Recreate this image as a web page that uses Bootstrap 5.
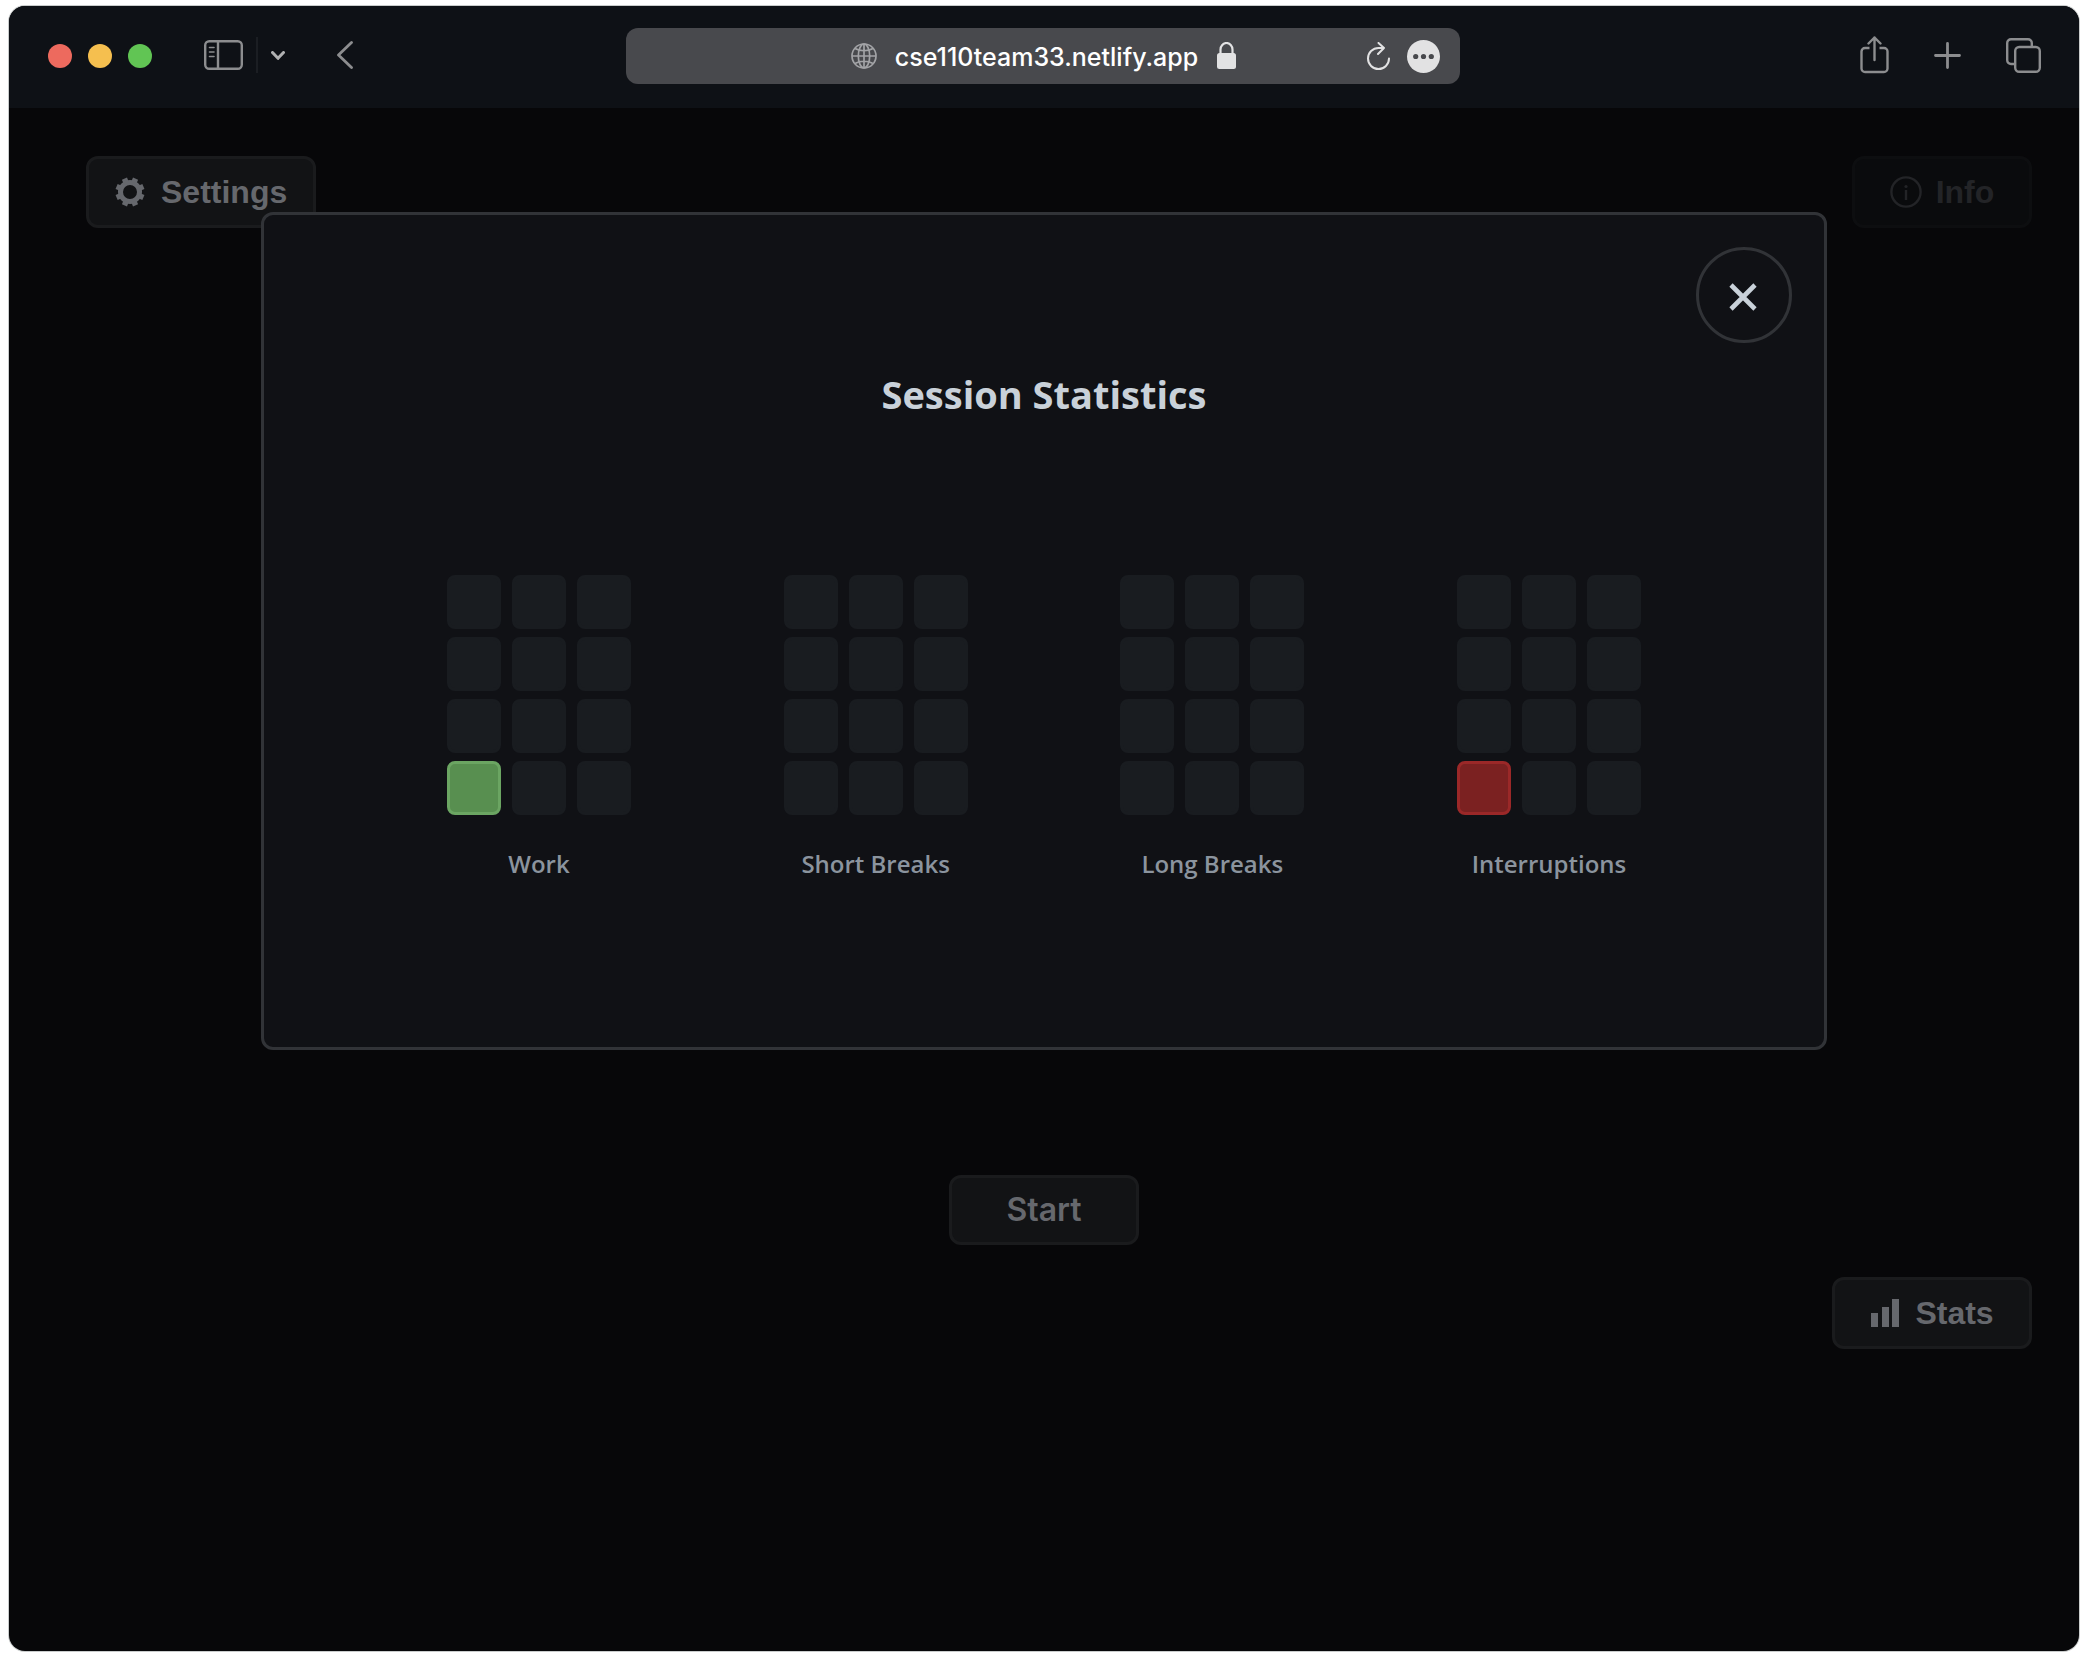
<!DOCTYPE html>
<html lang="en">
<head>
<meta charset="utf-8">
<meta name="viewport" content="width=device-width, initial-scale=1">
<title>Session Statistics</title>
<link href="https://cdn.jsdelivr.net/npm/bootstrap@5.3.0/dist/css/bootstrap.min.css" rel="stylesheet">
<style>
  body { background: #fff; padding: 6px 8px 6px 9px; font-family: "Liberation Sans", sans-serif; }
  svg { display: block; flex: none; }
  .browser { min-height: calc(100vh - 12px); border-radius: 16px; overflow: hidden; background: #070709; box-shadow: 0 0 0 1px #c9cccc; }
  /* browser toolbar */
  .toolbar { display: grid; grid-template-columns: 1fr minmax(0, 834px) 1fr; align-items: center; height: 102px; padding: 0 38px 4px 36px; background: #0e1116; color: #8c8d8f; }
  .toolbar button { padding: 0; border: 0; background: none; color: inherit; }
  .toolbar .light { width: 24px; height: 24px; border-radius: 50%; }
  .toolbar .light-close { background: #ed6a5e; }
  .toolbar .light-min { background: #f5bf4f; }
  .toolbar .light-max { background: #61c554; }
  .lights { gap: 16px; margin: 2px 0 0 3px; }
  .side-toggle { margin-left: 52px; }
  .split { width: 2px; height: 36px; margin: 0 13px; background: #1b1e23; }
  .back { margin-left: 52px; }
  .address { display: grid; grid-template-columns: 1fr auto 1fr; align-items: center; height: 56px; padding: 0 20px; border-radius: 12px; background: #48494d; margin-top: 2px; }
  .url { width: 308px; height: 42px; padding: 2px 0 0; border: 0; background: none; color: #fff; font: 500 25px/40px Inter, sans-serif; text-align: center; }
  .tools { gap: 45px; }
  /* page */
  .page-top { padding: 48px 47px 0 77px; }
  .timer-area { height: 947px; }
  .page-bottom { padding: 32px 47px 48px; }
  .pomo-btn { display: inline-flex; align-items: center; justify-content: center; gap: 16px; height: 72px; padding: 0 26px; border: 3px solid #1a1b1d; border-radius: 12px; background: #121315; color: #66686d; font: 700 32px/38px "Liberation Sans", sans-serif; }
  .btn-start { width: 190px; height: 70px; font: 600 32px/38px Inter, sans-serif; }
  .btn-info2 { width: 180px; gap: 14px; background: #0a0b0d; border-color: #0d0e10; color: #232427; }
  .btn-stats { width: 200px; }
  /* statistics dialog */
  .overlay { position: absolute; inset: 0; padding: 104px 252px 0; pointer-events: none; }
  .stats-dialog { position: relative; padding: 153px 183px 166px; border: 3px solid #313337; border-radius: 12px; background: #101115; font-family: "Open Sans", "Noto Sans", sans-serif; pointer-events: auto; }
  .close-btn { position: absolute; top: 32px; right: 32px; width: 96px; height: 96px; border: 3px solid #313337; border-radius: 50%; background: none; color: #c9d1d9; display: flex; align-items: center; justify-content: center; padding: 3px 3px 0 0; }
  .stats-title { margin: 0 0 155px; color: #c9d1d9; font-size: 38px; line-height: 52px; font-weight: 700; }
  .cells { display: grid; grid-template-columns: repeat(3, 54px); gap: 8px 11px; }
  .cell { height: 54px; border: 3px solid #191c20; border-radius: 8px; background: #191c20; }
  .cell-work { background: #588f50; border-color: #6ba562; }
  .cell-stop { background: #7b2121; border-color: #9b2828; }
  .stat-name { margin-top: 32px; color: #8b949e; font-size: 24px; line-height: 34px; font-weight: 600; text-align: center; }
</style>
</head>
<body>
<div class="browser">
  <header class="toolbar">
    <div class="d-flex align-items-center">
      <div class="lights d-flex">
        <button class="light light-close" aria-label="Close window"></button>
        <button class="light light-min" aria-label="Minimise"></button>
        <button class="light light-max" aria-label="Full screen"></button>
      </div>
      <button class="side-toggle" aria-label="Sidebar"><svg width="39" height="30" viewBox="0 0 39 30" fill="none" stroke="currentColor" stroke-width="2.400"><rect x="1.200" y="1.200" width="36.600" height="27.600" rx="4"/><path d="M14 1v28"/><path d="M5.500 7.500h4.500M5.500 12h4.500M5.500 16.500h4.500" stroke-width="1.600" stroke-linecap="round"/></svg></button>
      <div class="split"></div>
      <button aria-label="Tab groups"><svg width="14" height="9" viewBox="0 0 14 9" fill="none" stroke="#b0b1b2" stroke-width="3" stroke-linecap="round" stroke-linejoin="round"><path d="M1.500 1.500 7 7.300l5.500-5.800"/></svg></button>
      <button class="back" aria-label="Back"><svg width="16" height="28" viewBox="0 0 16 28" fill="none" stroke="currentColor" stroke-width="2.800" stroke-linecap="round" stroke-linejoin="round"><path d="M14.500 1.500 1.500 14l13 12.500"/></svg></button>
    </div>
    <div class="address">
      <span></span>
      <div class="d-flex align-items-center">
        <svg class="me-3" width="26" height="26" viewBox="0 0 26 26" fill="none" stroke="#a2a3a6" stroke-width="1.700"><circle cx="13" cy="13" r="12"/><ellipse cx="13" cy="13" rx="5.700" ry="12"/><path d="M13 1v24M1 13h24M4 5.500c5 3 13 3 18 0M4 20.500c5-3 13-3 18 0"/></svg>
        <input class="url" type="text" value="cse110team33.netlify.app" aria-label="Address">
        <svg class="ms-3" width="19" height="28" viewBox="0 0 19 28"><rect y="11" width="19" height="16" rx="2.500" fill="#e2e2e3"/><path d="M3.500 12V7.500a6 6.500 0 0 1 12 0V12" fill="none" stroke="#e2e2e3" stroke-width="2.200"/></svg>
      </div>
      <div class="d-flex align-items-center justify-content-end gap-3">
        <button aria-label="Reload"><svg width="24" height="28" viewBox="0 0 24 28" fill="none" stroke="#e2e2e3" stroke-width="2" stroke-linecap="round" stroke-linejoin="round"><path d="M22 16.500A10.500 10.500 0 1 1 11.500 6H17M11.500 1l5.500 5-6 6"/></svg></button>
        <button aria-label="Page menu"><svg width="33" height="33" viewBox="0 0 33 33"><circle cx="16.500" cy="16.500" r="16.500" fill="#e2e2e3"/><g fill="#48494d"><circle cx="8.700" cy="16.500" r="2.600"/><circle cx="16.500" cy="16.500" r="2.600"/><circle cx="24.300" cy="16.500" r="2.600"/></g></svg></button>
      </div>
    </div>
    <div class="tools d-flex align-items-center justify-content-end">
      <button aria-label="Share"><svg width="29" height="38" viewBox="0 0 29 38" fill="none" stroke="currentColor" stroke-width="2.400" stroke-linecap="round" stroke-linejoin="round"><path d="M9.500 12H5a3.500 3.500 0 0 0-3.500 3.500v17A3.500 3.500 0 0 0 5 36h19a3.500 3.500 0 0 0 3.500-3.500v-17A3.500 3.500 0 0 0 24 12h-4.500" stroke-linecap="butt"/><path d="M14.500 24V1.500M8.500 7.500l6-6 6 6"/></svg></button>
      <button aria-label="New tab"><svg width="27" height="27" viewBox="0 0 27 27" fill="none" stroke="currentColor" stroke-width="2.800" stroke-linecap="round"><path d="M13.500 1.500v24M1.500 13.500h24"/></svg></button>
      <button aria-label="Tab overview"><svg width="35" height="35" viewBox="0 0 35 35" fill="none" stroke="currentColor" stroke-width="2.400"><rect x="9.200" y="9" width="24.600" height="24.800" rx="4"/><path d="M9 26H5a3.800 3.800 0 0 1-3.800-3.800V5A3.800 3.800 0 0 1 5 1.200h17A3.800 3.800 0 0 1 25.800 5v4"/></svg></button>
    </div>
  </header>

  <main class="position-relative">
    <div class="page-top d-flex justify-content-between">
      <button class="pomo-btn"><svg width="30" height="30" viewBox="-15 -15 30 30" fill="none" stroke="currentColor"><circle r="9.500" stroke-width="5"/><g stroke-width="5.500"><path d="M0-14.500V-10" transform="rotate(22.500)"/><path d="M0-14.500V-10" transform="rotate(67.500)"/><path d="M0-14.500V-10" transform="rotate(112.500)"/><path d="M0-14.500V-10" transform="rotate(157.500)"/><path d="M0-14.500V-10" transform="rotate(202.500)"/><path d="M0-14.500V-10" transform="rotate(247.500)"/><path d="M0-14.500V-10" transform="rotate(292.500)"/><path d="M0-14.500V-10" transform="rotate(337.500)"/></g></svg>Settings</button>
      <button class="pomo-btn btn-info2"><svg width="32" height="32" viewBox="0 0 32 32" fill="none" stroke="currentColor" stroke-width="2.400"><circle cx="16" cy="16" r="14.600"/><path d="M16 14v10"/><circle cx="16" cy="10.500" r="1.600" fill="currentColor" stroke="none"/></svg>Info</button>
    </div>
    <div class="timer-area"></div>
    <div class="d-flex justify-content-center"><button class="pomo-btn btn-start">Start</button></div>
    <div class="page-bottom d-flex justify-content-end">
      <button class="pomo-btn btn-stats"><svg width="29" height="28" viewBox="0 0 29 28" fill="currentColor"><path d="M1 14h7v14H1zM12 8h7v20h-7zM22 0h7v28h-7z"/></svg>Stats</button>
    </div>

    <div class="overlay">
      <section class="stats-dialog" role="dialog" aria-labelledby="stats-title">
        <button class="close-btn" aria-label="Close"><svg width="28" height="28" viewBox="0 0 28 28" fill="none" stroke="currentColor" stroke-width="4.600"><path d="M2 2l24 24M26 2 2 26"/></svg></button>
        <h1 class="stats-title text-center" id="stats-title">Session Statistics</h1>
        <div class="d-flex justify-content-between">
          <div>
            <div class="cells"><i class="cell"></i><i class="cell"></i><i class="cell"></i><i class="cell"></i><i class="cell"></i><i class="cell"></i><i class="cell"></i><i class="cell"></i><i class="cell"></i><i class="cell cell-work"></i><i class="cell"></i><i class="cell"></i></div>
            <div class="stat-name">Work</div>
          </div>
          <div>
            <div class="cells"><i class="cell"></i><i class="cell"></i><i class="cell"></i><i class="cell"></i><i class="cell"></i><i class="cell"></i><i class="cell"></i><i class="cell"></i><i class="cell"></i><i class="cell"></i><i class="cell"></i><i class="cell"></i></div>
            <div class="stat-name">Short Breaks</div>
          </div>
          <div>
            <div class="cells"><i class="cell"></i><i class="cell"></i><i class="cell"></i><i class="cell"></i><i class="cell"></i><i class="cell"></i><i class="cell"></i><i class="cell"></i><i class="cell"></i><i class="cell"></i><i class="cell"></i><i class="cell"></i></div>
            <div class="stat-name">Long Breaks</div>
          </div>
          <div>
            <div class="cells"><i class="cell"></i><i class="cell"></i><i class="cell"></i><i class="cell"></i><i class="cell"></i><i class="cell"></i><i class="cell"></i><i class="cell"></i><i class="cell"></i><i class="cell cell-stop"></i><i class="cell"></i><i class="cell"></i></div>
            <div class="stat-name">Interruptions</div>
          </div>
        </div>
      </section>
    </div>
  </main>
</div>
<script src="https://cdn.jsdelivr.net/npm/bootstrap@5.3.0/dist/js/bootstrap.bundle.min.js"></script>
</body>
</html>
